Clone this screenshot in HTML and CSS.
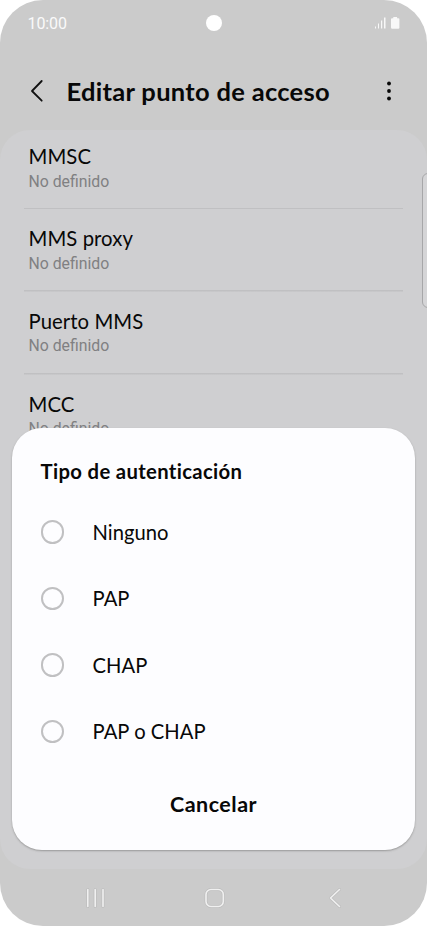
FILE: index.html
```html
<!DOCTYPE html>
<html lang="es">
<head>
<meta charset="utf-8">
<title>Editar punto de acceso</title>
<link rel="stylesheet" href="styles.css">
</head>
<body>
<main class="screen">
  <header class="status">
    <span class="clock">10:00</span>
    <span class="camera"></span>
    <svg class="indicators" width="28" height="14" viewBox="0 0 28 14" fill="#f8f8f8">
      <path d="M1 10.500h1v2H1zM4 7.500h1v5H4zM7 4.500h1.200v8H7zM10 1.500h1.500v11H10z"/>
      <path d="M19.300 1h3.800v1.200h1.300q1 0 1 1v8.300q0 1.200-1.200 1.200h-6q-1.200 0-1.200-1.200V3.200q0-1 1-1h1.300z"/>
    </svg>
  </header>
  <div class="titlebar">
    <svg class="back" width="14" height="24" viewBox="0 0 14 24"><path d="M11.700 2 2 12l9.700 9.700" fill="none" stroke="#111" stroke-width="1.800" stroke-linecap="round" stroke-linejoin="round"/></svg>
    <h1>Editar punto de acceso</h1>
    <svg class="more" width="6" height="20" viewBox="0 0 6 20" fill="#080808"><circle cx="3" cy="2.500" r="1.900"/><circle cx="3" cy="10" r="1.900"/><circle cx="3" cy="17.500" r="1.900"/></svg>
  </div>
  <section class="settings">
    <div class="row"><span class="name">MMSC</span><span class="value">No definido</span></div>
    <div class="row"><span class="name">MMS proxy</span><span class="value">No definido</span></div>
    <div class="row"><span class="name">Puerto MMS</span><span class="value">No definido</span></div>
    <div class="row"><span class="name">MCC</span><span class="value">No definido</span></div>
  </section>
  <nav class="navbar">
    <svg width="427" height="56" viewBox="0 0 427 56" fill="none">
      <g stroke="#bdbdbd" stroke-width="3" stroke-linecap="round" stroke-linejoin="round"><path d="M87.800 20.500v17M95.200 20.500v17M103 20.500v17M339.500 20.500l-9 8.500 9 8.500"/><rect x="206" y="20.500" width="17.300" height="17" rx="5"/></g>
      <g stroke="#f0f0f0" stroke-width="1.600" stroke-linecap="round" stroke-linejoin="round"><path d="M87.800 20.500v17M95.200 20.500v17M103 20.500v17M339.500 20.500l-9 8.500 9 8.500"/><rect x="206" y="20.500" width="17.300" height="17" rx="5"/></g>
    </svg>
  </nav>
  <div class="edge-handle"></div>
  <section class="dialog">
    <h2>Tipo de autenticación</h2>
    <div class="options">
      <div class="option"><i class="radio"></i><span>Ninguno</span></div>
      <div class="option"><i class="radio"></i><span>PAP</span></div>
      <div class="option"><i class="radio"></i><span>CHAP</span></div>
      <div class="option"><i class="radio"></i><span>PAP o CHAP</span></div>
    </div>
    <div class="cancel">Cancelar</div>
  </section>
</main>
</body>
</html>
```
FILE: styles.css
```css
* { box-sizing: border-box; }
body { margin: 0; background: #fff; font-family: Lato, "Liberation Sans", sans-serif; font-variant-ligatures: none; color: #080808; }
h1, h2 { margin: 0; }
span, h1, h2 { white-space: nowrap; }
.screen { position: relative; width: 427px; height: 926px; overflow: hidden; background: #cbcbcb; border-radius: 43px; display: flex; flex-direction: column; }
.status { height: 46px; display: grid; grid-template-columns: 1fr 16px 1fr; align-items: center; padding: 0 25.500px; flex: none; }
.clock { color: #fafafa; font: 400 16px/20px Roboto, sans-serif; letter-spacing: -0.1px; padding: 1px 0 0 2px; }
.camera { width: 16px; height: 16px; border-radius: 50%; background: #fff; }
.indicators { justify-self: end; }
.titlebar { height: 84px; display: flex; align-items: center; padding: 7px 35.500px 0 29.500px; flex: none; }
.titlebar h1 { margin: -2px 0 0 23px; font-size: 25.500px; line-height: 32px; font-weight: 700; letter-spacing: 0.3px; }
.back, .more { position: relative; top: -0.500px; }
.more { margin-left: auto; }
.settings { height: 739px; flex: none; background: #cfcfd1; border-radius: 30px; padding: 0 24px; overflow: hidden; display: flex; flex-direction: column; }
.row { height: 82.700px; flex: none; padding: 15px 4.500px 0; display: flex; flex-direction: column; background: linear-gradient(#c0c0c2, #c0c0c2) left bottom / 100% 1.500px no-repeat; }
.row:first-child { height: 79.200px; padding-top: 12px; }
.name { font-size: 20.300px; line-height: 28px; letter-spacing: 0.07px; }
.value { margin-top: 1.600px; font: 400 15.800px/20px Roboto, sans-serif; color: #808082; letter-spacing: 0; }
.navbar { height: 56px; flex: none; }
.edge-handle { position: absolute; left: 422px; top: 173px; width: 12px; height: 135px; border: 1px solid #a7a7a9; border-radius: 6px; background: #d5d5d7; }
.dialog { position: absolute; left: 12px; top: 428px; width: 403px; height: 422px; background: #fdfdff; border-radius: 30px; box-shadow: 0 1px 2px #999; display: flex; flex-direction: column; }
.dialog h2 { font-size: 20.300px; line-height: 28px; margin: 29px 0 0 28.500px; font-weight: 700; letter-spacing: 0.34px; }
.options { margin-top: 13.500px; }
.option { height: 66.500px; display: flex; align-items: center; padding-left: 28.500px; gap: 28.500px; font-size: 20.200px; letter-spacing: 0.03px; }
.radio { width: 23.500px; height: 23.500px; border: 2px solid #c0c0c2; border-radius: 50%; }
.cancel { margin-top: 25px; text-align: center; font-size: 21.500px; line-height: 28px; font-weight: 700; letter-spacing: 0.5px; }
```
